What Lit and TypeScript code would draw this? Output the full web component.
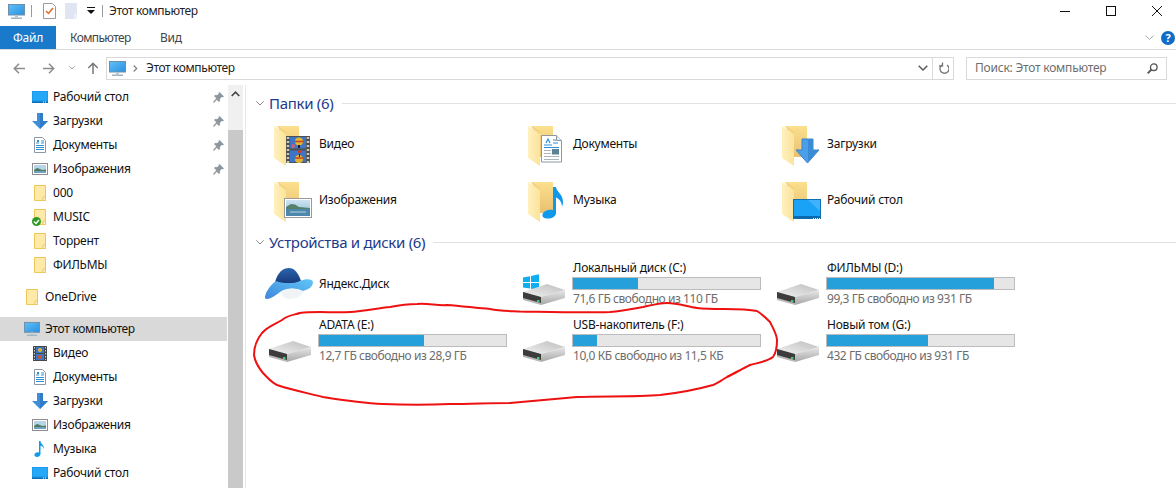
import { LitElement, html, css, svg } from "lit";
import { customElement } from "lit/decorators.js";

const monitor = (s = 17) => html`<svg class="ic" width=${s} height=${s} viewBox="0 0 17 17">
  <rect x="0.5" y="1.5" width="16" height="10.5" fill="url(#scr)" stroke="#6f8fa8"/>
  <rect x="7" y="12" width="3" height="2.5" fill="#b9c6d0"/>
  <rect x="3" y="14.5" width="11" height="1.5" fill="#9fb4c4"/></svg>`;

const smDesktop = () => html`<svg class="ic" width="16" height="16" viewBox="0 0 16 16">
  <rect x="0" y="2" width="16" height="12" fill="#1c9cf0"/><path d="M1 3h14v8H1z" fill="#26a8f8"/>
  <rect x="0" y="12.5" width="16" height="1.5" fill="#0b6fb5"/><path d="M11 13h4" stroke="#fff" stroke-dasharray="1 1"/></svg>`;
const smArrow = () => html`<svg class="ic" width="16" height="16" viewBox="0 0 16 16">
  <path d="M5 0h6v8h5l-8 8-8-8h5z" fill="#3d8fdc"/><path d="M8 0h3v8h5l-8 8z" fill="#2f7cc8"/></svg>`;
const smDoc = () => html`<svg class="ic" width="16" height="16" viewBox="0 0 16 16">
  <path d="M2.500 0.500h8l3 3v12h-11z" fill="#fff" stroke="#8d98a3"/>
  <path d="M4 6h3M9 4h3M9 6h3M4 8.500h8M4 10.500h8M4 12.500h8" stroke="#2f8fd6"/>
  <path d="M5 3h2v2H5z" fill="#2f8fd6"/></svg>`;
const smPic = () => html`<svg class="ic" width="16" height="16" viewBox="0 0 16 16">
  <rect x="0.500" y="2.500" width="15" height="11" fill="#fff" stroke="#8d8d8d"/>
  <rect x="2" y="4" width="12" height="8" fill="#b6d4ea"/><path d="M2 9l3-2 3 1 2 1 4-.5V10H2z" fill="#4f7a5f"/><rect x="2" y="10" width="12" height="2" fill="#6fa0c0"/></svg>`;
const smFolder = () => html`<svg class="ic" width="16" height="16" viewBox="0 0 16 16">
  <path d="M2.500 0.500h11v15h-11z" fill="#ffe9a8" stroke="#ecc858"/><path d="M11 12h2.500v3.500H11z" fill="#fff3c8" stroke="#ecc858"/></svg>`;
const smFilm = () => html`<svg class="ic" width="16" height="16" viewBox="0 0 16 16">
  <rect x="1" y="1" width="14" height="15" fill="#45494c"/>
  <path d="M2.500 2v13M13.500 2v13" stroke="#cfcfcf" stroke-dasharray="1.500 1.500"/>
  <rect x="4" y="2" width="8" height="6" fill="#3c78c8"/><rect x="4" y="9" width="8" height="6" fill="#3c78c8"/>
  <circle cx="8" cy="5" r="2" fill="#e8b52a"/><circle cx="8" cy="12" r="2" fill="#d8502c"/></svg>`;
const smMusic = () => html`<svg class="ic" width="16" height="16" viewBox="0 0 16 16">
  <path d="M7 0h1.500c0 3 4 4 3.500 8-.5-2-2-3-3.500-3.200V13c0 2-2 3-3.500 3S2 15 2.500 13.500 5 11 7 11.500z" fill="#0f9bec"/></svg>`;
const pin = () => html`<svg class="pin" width="11" height="11" viewBox="0 0 11 11">
  <path d="M6.500 0L11 4.500 9.800 5.200 8.800 5 6.800 7l.2 2-1 1-2.300-2.300L1 11 0 10l3.300-3.700L1 4l1-1 2 .2 2-2-.2-1z" fill="#8f979e"/></svg>`;

const folderBase = () => svg`
  <path d="M8 6h21v31H16z" fill="url(#fback)"/>
  <path d="M4 6l12 8v32L4 38z" fill="url(#fflap)"/>
  <path d="M16 14L6 6h2l8 6z" fill="#e9c56e" opacity=".5"/>`;

const big = (c: unknown) => html`<svg class="big" width="48" height="48" viewBox="0 0 48 48">${folderBase()}${c}</svg>`;

const ovFilm = svg`
  <rect x="16" y="16" width="24" height="27" fill="#50504c"/>
  <path d="M18 17v26M38 17v26" stroke="#c9c9bd" stroke-width="2.500" stroke-dasharray="2 2"/>
  <rect x="20" y="17" width="16" height="11.500" fill="#3f75c6"/><rect x="20" y="30.500" width="16" height="11.500" fill="#3f75c6"/>
  <circle cx="29" cy="21.500" r="4" fill="#e2b52e"/><path d="M25 21.500h8" stroke="#c8402a" stroke-width="1.500"/><path d="M28 25h2v3h-2z" fill="#222"/>
  <path d="M22 24l3 1-1 3h-2z" fill="#d65f7a"/><circle cx="29" cy="39" r="4" fill="#e2b52e"/><path d="M25 38h8" stroke="#c8402a" stroke-width="1.500"/>
  <path d="M27 30.500h5l-2.500 4z" fill="#d83a2c"/><path d="M29 34h1v3h-1z" fill="#222"/>`;
const ovDoc = svg`
  <path d="M17.500 15.500h15l5 5v21.500h-20z" fill="#fff" stroke="#8e979f"/><path d="M32.500 15.500v5h5" fill="#e8edf2" stroke="#8e979f"/>
  <path d="M20 25h8M29 20h3M29 23h5M20 27.500h15" stroke="#2d8fd8"/><path d="M22 23l2-4 2 4" fill="none" stroke="#2d8fd8" stroke-width="1.200"/>
  <path d="M20 30.500h7M20 33.500h7M20 36.500h15M20 39.500h15" stroke="#aeb4ba"/><rect x="28" y="29" width="7" height="5.500" fill="#5d8296"/>`;
const ovArrow = svg`
  <path d="M24 19h11v11h6L29.500 43 18 30h6z" fill="#4a9fea" stroke="#3a82c8"/><path d="M30 20h4.500v10.500H40L30 41.500z" fill="#3a8ad6"/>`;
const ovPic = svg`
  <rect x="14.500" y="22.500" width="27" height="19" fill="#fff" stroke="#9a9a9a"/>
  <rect x="16" y="24" width="24" height="16" fill="url(#sky)"/>
  <path d="M16 31l5-3 4 .5 4 2.500 11 1v1.500H16z" fill="#55806a"/><rect x="16" y="33" width="24" height="7" fill="#4d88ac"/><path d="M20 36h16" stroke="#b8d4e4"/>`;
const ovMusic = svg`
  <path d="M29 11h3c.5 5 7 7 7 15 0 2-.5 3.500-1 5 0-5-3-8.500-6-9.500V37c0 3.500-4 5.500-8 5.500-4 0-6-1.500-5.500-4 .5-3 5.500-5.500 10.500-4.500z" fill="#1099ec"/>`;
const ovDesk = svg`
  <rect x="15.500" y="23.500" width="27" height="19" fill="#1aa2f6" stroke="#0f6fb0"/>
  <path d="M30 24h12v11z" fill="#3fb2fa"/><rect x="16" y="40" width="26" height="2.500" fill="#0a69ac"/><path d="M35 42.500h7" stroke="#fff" stroke-dasharray="1 1"/>`;

const drive = (win = false) => html`<svg class="big" width="48" height="48" viewBox="0 0 48 48">
  ${win ? svg`<g fill="#0eaff0"><path d="M-1 17.500l7-1.200V22H-1z"/><path d="M7 16l8-1.800V22H7z"/><path d="M-1 23h7v5.500l-7-1z"/><path d="M7 23h8v7l-8-1.200z"/></g>` : ""}
  <path d="M-1 32L23 24l18 6-24 7z" fill="url(#hddtop)"/>
  <path d="M17 37l24-7v8L17 45z" fill="url(#hdd)"/>
  <path d="M-1 32l18 5v8L-1 40z" fill="#b8b8b8"/>
  <path d="M-1 32l18 5v6L-1 38z" fill="#3c3c3c"/>
  <rect x="13" y="40" width="2.500" height="2" fill="#35d06a"/></svg>`;

const yandex = () => html`<svg class="big" width="48" height="48" viewBox="0 0 48 48">
  <path d="M5 22C8 12 13 8 19 8c5 0 9 4 12 13-7 4-17 3-26 1z" fill="url(#yd)"/>
  <path d="M-5 37C-4 30 2 24 6 21c8 3 18 3 24 0 6-3 13-2 13 1 0 6-7 8-10 9-8-4-18-3-23 1-5 4-10 7-13 7-2 0-2-1-2-2z" fill="url(#yl)"/>
  <path d="M11 33c4-5 16-6 23-1-4 5-9 7-14 7-4 0-7-1-9-6z" fill="#f1f4f6"/></svg>`;

interface F { n: string; ov: unknown }
const folders: F[] = [
  { n: "Видео", ov: ovFilm }, { n: "Документы", ov: ovDoc }, { n: "Загрузки", ov: ovArrow },
  { n: "Изображения", ov: ovPic }, { n: "Музыка", ov: ovMusic }, { n: "Рабочий стол", ov: ovDesk },
];
interface D { n: string; s: string; p: number; win?: boolean }
const drives: (D | null)[] = [
  null,
  { n: "Локальный диск (C:)", s: "71,6 ГБ свободно из 110 ГБ", p: 35, win: true },
  { n: "ФИЛЬМЫ (D:)", s: "99,3 ГБ свободно из 931 ГБ", p: 89.3 },
  { n: "ADATA (E:)", s: "12,7 ГБ свободно из 28,9 ГБ", p: 56 },
  { n: "USB-накопитель (F:)", s: "10,0 КБ свободно из 11,5 КБ", p: 13 },
  { n: "Новый том (G:)", s: "432 ГБ свободно из 931 ГБ", p: 54 },
];

const quick: [unknown, string, boolean][] = [
  [smDesktop(), "Рабочий стол", true], [smArrow(), "Загрузки", true], [smDoc(), "Документы", true], [smPic(), "Изображения", true],
  [smFolder(), "000", false],
];
const quick2: [unknown, string, boolean][] = [[smFolder(), "Торрент", false], [smFolder(), "ФИЛЬМЫ", false]];
const pc: [unknown, string][] = [
  [smFilm(), "Видео"], [smDoc(), "Документы"], [smArrow(), "Загрузки"], [smPic(), "Изображения"], [smMusic(), "Музыка"], [smDesktop(), "Рабочий стол"],
];

@customElement("app-root")
export class AppRoot extends LitElement {
  static styles = css`
    :host { display: block; width: 1176px; height: 488px; overflow: hidden; position: relative; background: #fff;
      font: 12px/16px "Noto Sans", sans-serif; letter-spacing: -0.22px; color: #111; }
    svg { display: block; flex: none; }
    svg.big { overflow: visible; }
    .defs { width: 0; height: 0; position: absolute; }
    .title { height: 26px; display: flex; align-items: center; padding-left: 8px; box-sizing: border-box; padding-bottom: 4px; }
    .sep { width: 1px; height: 12px; background: #9a9a9a; }
    .title .name { margin-left: 6px; color: #222; letter-spacing: -0.38px; }
    .winctl { margin-left: auto; display: flex; align-items: center; }
    .winctl svg { margin-right: 36px; }
    .winctl svg:last-child { margin-right: 14px; }
    .tabs { height: 23px; display: flex; border-bottom: 1px solid #dadbdc; align-items: stretch; }
    .tab { display: flex; align-items: center; color: #444; }
    .tab.file { width: 56px; background: #1979ca; color: #fff; justify-content: center; }
    .tab.comp { width: 90px; padding-left: 14px; box-sizing: border-box; letter-spacing: -0.62px; }
    .tab.view { padding-left: 14px; }
    .tabs .right { margin-left: auto; display: flex; align-items: center; gap: 7px; padding-right: 1px; }
    .nav { height: 35px; display: flex; align-items: center; padding-left: 13px; box-sizing: border-box; padding-top: 1px; }
    .addr { margin-left: 7px; width: 848px; height: 23px; box-sizing: border-box; border: 1px solid #d9d9d9; display: flex; align-items: center; padding-left: 2px; }
    .addr .crumb { margin-left: 8px; color: #222; letter-spacing: -0.38px; }
    .addr .tick { margin-left: 7px; }
    .addr .dd { margin-left: auto; margin-right: 4px; }
    .addr .rf { width: 20px; height: 21px; border-left: 1px solid #d9d9d9; display: flex; align-items: center; justify-content: center; }
    .search { margin-left: 12px; width: 201px; height: 23px; box-sizing: border-box; border: 1px solid #d9d9d9; display: flex; align-items: center; padding: 0 8px; color: #6d6d6d; justify-content: space-between; }
    .body { display: flex; height: 403px; }
    .side { width: 228px; flex: none; padding-top: 0; }
    .row { height: 24px; display: flex; align-items: center; padding-left: 32px; padding-right: 4px; color: #111; }
    .row .ic { margin-right: 5px; }
    .row.top { padding-left: 24px; margin-top: 8px; }
    .row.sel { background: #d9d9d9; width: 227px; box-sizing: border-box; letter-spacing: -0.3px; }
    .row .pin { margin-left: auto; margin-right: 0; }
    .checkwrap { position: relative; width: 16px; height: 16px; margin-right: 5px; }
    .check { position: absolute; left: 0; top: 8px; }
    .sb { width: 15px; flex: none; background: #f0f0f0; display: flex; flex-direction: column; }
    .sb .up { display: flex; justify-content: center; padding-top: 6px; box-sizing: border-box; height: 45px; }
    .sb .thumb { flex: 1; background: #c9c9c9; }
    .vline { width: 1px; margin-left: 2px; background: #e8e8e8; flex: none; }
    .main { flex: 1; padding-left: 10px; min-width: 0; }
    .hdr { display: flex; align-items: center; height: 20px; gap: 5px; color: #1e3a8a; font-size: 15px; letter-spacing: -0.3px; }
    .hdr .line { flex: 1; height: 1px; background: #e2e2e2; margin-left: 3px; }
    .h1 { margin-top: 8px; }
    .h2 { margin-top: 4px; }
    .grid { display: grid; grid-template-columns: repeat(3, 254px); padding-left: 14px; }
    .fg { margin-top: 3px; }
    .fg .it { height: 56px; }
    .dg { margin-top: 3px; }
    .dg .it { height: 57px; }
    .it { display: flex; align-items: center; }
    .it .txt { margin-left: 1px; }
    .d { margin-left: 0; width: 189px; flex: none; }
    .d .nm { padding-left: 1px; height: 16px; }
    .bar { height: 13px; box-sizing: border-box; border: 1px solid #bcbcbc; background: #e6e6e6; margin: 1px 0 0; }
    .fill { height: 100%; background: #26a0da; }
    .d .sub { padding-left: 1px; color: #6d6d6d; margin-top: 1px; height: 16px; letter-spacing: -0.44px; }
    .scribble { position: absolute; left: 0; top: 0; pointer-events: none; }
  `;

  render() {
    return html`
    <svg class="defs"><defs>
      <linearGradient id="scr" x1="0" y1="0" x2="1" y2="1"><stop offset="0" stop-color="#5fc0f8"/><stop offset="1" stop-color="#2a90e0"/></linearGradient>
      <linearGradient id="fback" x1="0" y1="0" x2="0" y2="1"><stop offset="0" stop-color="#fbe08e"/><stop offset="1" stop-color="#e8c070"/></linearGradient>
      <linearGradient id="fflap" x1="0" y1="0" x2="1" y2="0"><stop offset="0" stop-color="#fff0bf"/><stop offset="1" stop-color="#fbe39a"/></linearGradient>
      <linearGradient id="sky" x1="0" y1="0" x2="0" y2="1"><stop offset="0" stop-color="#cfe4f2"/><stop offset="1" stop-color="#8ab8d8"/></linearGradient>
      <linearGradient id="hdd" x1="0" y1="0" x2="0" y2="1"><stop offset="0" stop-color="#e8e8e8"/><stop offset="1" stop-color="#a6a6a6"/></linearGradient>
      <linearGradient id="hddtop" x1="0" y1="1" x2="1" y2="0"><stop offset="0" stop-color="#f2f2f2"/><stop offset="1" stop-color="#bdbdbd"/></linearGradient>
      <linearGradient id="yd" x1="0" y1="0" x2="0" y2="1"><stop offset="0" stop-color="#2b63ae"/><stop offset="1" stop-color="#173a78"/></linearGradient>
      <linearGradient id="yl" x1="0" y1="1" x2="1" y2="0"><stop offset="0" stop-color="#3d87dc"/><stop offset="1" stop-color="#62c6f6"/></linearGradient>
    </defs></svg>

    <div class="title">
      ${monitor()}
      <div class="sep" style="margin-left:6px"></div>
      <svg style="margin-left:11px" width="13" height="16" viewBox="0 0 13 16"><path d="M.5.5h9l3 3v12H.5z" fill="#fff" stroke="#9a9a9a"/><path d="M3 8l2.500 2.500L10 5" fill="none" stroke="#e06a2c" stroke-width="1.500"/></svg>
      <svg style="margin-left:9px" width="13" height="16" viewBox="0 0 13 16"><path d="M0 0h12v16H0z" fill="#dfe6f2"/><path d="M9 11h3v5H9z" fill="#eef2f8"/></svg>
      <svg style="margin-left:9px" width="8" height="8" viewBox="0 0 8 8"><path d="M0 0h8v1H0zM0 3h8L4 7z" fill="#111"/></svg>
      <div class="sep" style="margin-left:7px"></div>
      <span class="name">Этот компьютер</span>
      <div class="winctl">
        <svg width="10" height="10" viewBox="0 0 10 10"><path d="M0 5.500h10" stroke="#111"/></svg>
        <svg width="10" height="10" viewBox="0 0 10 10"><rect x=".5" y=".5" width="9" height="9" fill="none" stroke="#111"/></svg>
        <svg width="10" height="10" viewBox="0 0 10 10"><path d="M0 0l10 10M10 0L0 10" stroke="#111"/></svg>
      </div>
    </div>

    <div class="tabs">
      <div class="tab file">Файл</div><div class="tab comp">Компьютер</div><div class="tab view">Вид</div>
      <div class="right">
        <svg width="9" height="6" viewBox="0 0 9 6"><path d="M.5.500l4 4 4-4" fill="none" stroke="#aaa"/></svg>
        <svg width="14" height="14" viewBox="0 0 14 14"><circle cx="7" cy="7" r="7" fill="#0f6cc8"/><text x="7" y="11" font-size="11" font-weight="700" text-anchor="middle" fill="#fff" font-family="Noto Sans">?</text></svg>
      </div>
    </div>

    <div class="nav">
      <svg width="12" height="11" viewBox="0 0 12 11"><path d="M12 5.500H1.500M6 .8L1.300 5.500 6 10.200" fill="none" stroke="#8c8c8c" stroke-width="1.500"/></svg>
      <svg style="margin-left:18px" width="12" height="11" viewBox="0 0 12 11"><path d="M0 5.500h10.500M6 .8l4.700 4.700L6 10.200" fill="none" stroke="#8c8c8c" stroke-width="1.500"/></svg>
      <svg style="margin-left:14px" width="6" height="4" viewBox="0 0 6 4"><path d="M.3.300L3 3l2.700-2.700" fill="none" stroke="#a0a0a0"/></svg>
      <svg style="margin-left:12px" width="12" height="12" viewBox="0 0 12 12"><path d="M6 12V1.500M1.300 6L6 1.300 10.700 6" fill="none" stroke="#777" stroke-width="1.500"/></svg>
      <div class="addr">
        ${monitor()}
        <svg class="tick" width="5" height="7" viewBox="0 0 5 7"><path d="M.7.500l3 3-3 3" fill="none" stroke="#808080" stroke-width="1.200"/></svg>
        <span class="crumb">Этот компьютер</span>
        <svg class="dd" width="10" height="6" viewBox="0 0 10 6"><path d="M.7.700L5 5 9.300.7" fill="none" stroke="#555" stroke-width="1.400"/></svg>
        <div class="rf"><svg width="11" height="12" viewBox="0 0 11 12"><path d="M3 2.500a4.500 4.500 0 1 0 5 0M3.500 0v3.500H0" fill="none" stroke="#777" stroke-width="1.300" transform="translate(1 .5)"/></svg></div>
      </div>
      <div class="search"><span>Поиск: Этот компьютер</span>
        <svg width="11" height="11" viewBox="0 0 11 11"><circle cx="6.800" cy="4.200" r="3.300" fill="none" stroke="#555" stroke-width="1.300"/><path d="M4.500 6.500L.7 10.300" stroke="#555" stroke-width="1.800"/></svg>
      </div>
    </div>

    <div class="body">
      <div class="side">
        ${quick.map(([i, t, p]) => html`<div class="row">${i}<span>${t}</span>${p ? pin() : ""}</div>`)}
        <div class="row"><div class="checkwrap">${smFolder()}<svg class="check" width="9" height="9" viewBox="0 0 9 9"><circle cx="4.500" cy="4.500" r="4.500" fill="#2f9a24"/><path d="M2 4.500l2 2 3-3.500" fill="none" stroke="#fff" stroke-width="1.400"/></svg></div><span>MUSIC</span></div>
        ${quick2.map(([i, t]) => html`<div class="row">${i}<span>${t}</span></div>`)}
        <div class="row top">${smFolder()}<span>OneDrive</span></div>
        <div class="row top sel">${monitor(16)}<span>Этот компьютер</span></div>
        ${pc.map(([i, t]) => html`<div class="row">${i}<span>${t}</span></div>`)}
      </div>
      <div class="sb">
        <div class="up"><svg width="9" height="6" viewBox="0 0 9 6"><path d="M.7 5L4.500 1.200 8.300 5" fill="none" stroke="#444" stroke-width="1.600"/></svg></div>
        <div class="thumb"></div>
      </div>
      <div class="vline"></div>
      <div class="main">
        <div class="hdr h1">
          <svg width="8" height="5" viewBox="0 0 8 5"><path d="M.3.300L4 4 7.700.3" fill="none" stroke="#8a8a8a"/></svg>
          <span>Папки (6)</span><div class="line"></div>
        </div>
        <div class="grid fg">
          ${folders.map((f) => html`<div class="it">${big(f.ov)}<span class="txt">${f.n}</span></div>`)}
        </div>
        <div class="hdr h2">
          <svg width="8" height="5" viewBox="0 0 8 5"><path d="M.3.300L4 4 7.700.3" fill="none" stroke="#8a8a8a"/></svg>
          <span>Устройства и диски (6)</span><div class="line"></div>
        </div>
        <div class="grid dg">
          ${drives.map((d) => d === null
            ? html`<div class="it">${yandex()}<span class="txt">Яндекс.Диск</span></div>`
            : html`<div class="it">${drive(d.win)}<div class="d">
                <div class="nm">${d.n}</div>
                <div class="bar"><div class="fill" style="width:${d.p}%"></div></div>
                <div class="sub">${d.s}</div></div></div>`)}
        </div>
      </div>
    </div>

    <svg class="scribble" width="1176" height="488" viewBox="0 0 1176 488">
      <path d="M254 355C254 345 258 338 262 333C268 326 276 324 282 320C288 315 294 315 300 313C315 311 335 313 350 312C365 311 378 308 390 307C400 305 408 304 417 304C428 303 438 306 447 305C462 306 476 308 490 309C500 311 510 311 520 311.500C550 312 585 313 610 312C622 311 632 309 643 307C652 305 660 303 667 303C678 303 688 307 697 308C715 310 740 308 757 311C762 314 766 318 770 322C774 330 777 335 777 340C777 348 776 353 773 357C766 362 757 363 750 365C742 369 735 373 727 377C722 380 718 383 713 385C695 390 678 393 660 395C635 397 605 396 577 397C555 399 532 401 510 403C490 403 470 404 450 404C428 405 405 405 383 404C362 403 342 400 323 397C307 393 292 390 277 385C271 382 267 377 263 373C258 367 255 362 254 355Z" fill="none" stroke="#ee1111" stroke-width="2"/>
    </svg>`;
  }
}
